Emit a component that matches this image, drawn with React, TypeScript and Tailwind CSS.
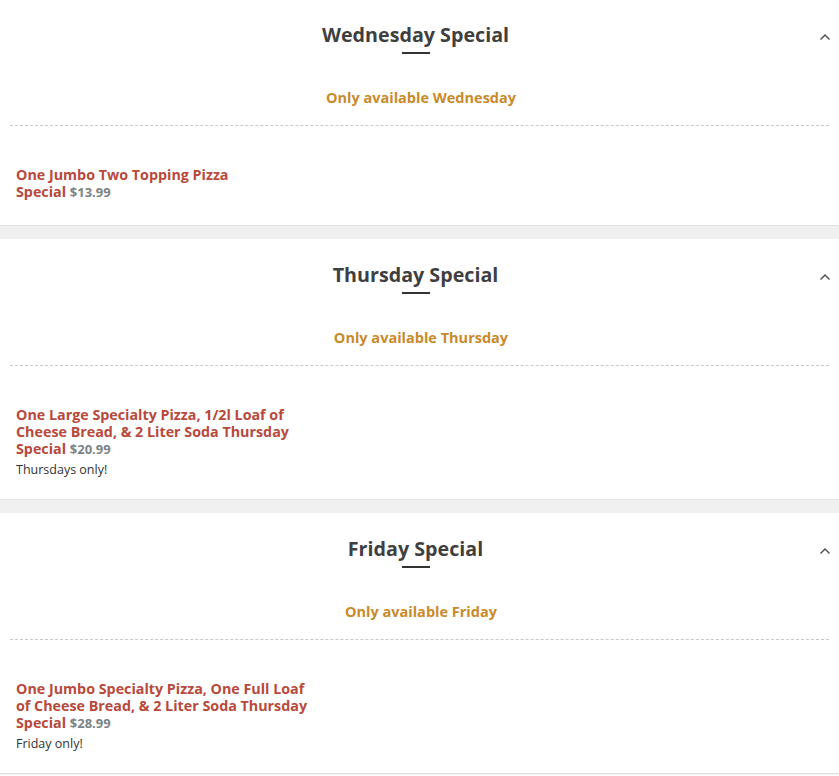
import React from "react";

type Special = {
  day: string;
  name: string;
  lastWord: string;
  price: string;
  note?: string;
};

const specials: Special[] = [
  {
    day: "Wednesday",
    name: "One Jumbo Two Topping Pizza",
    lastWord: "Special",
    price: "$13.99",
  },
  {
    day: "Thursday",
    name: "One Large Specialty Pizza, 1/2l Loaf of Cheese Bread, & 2 Liter Soda Thursday",
    lastWord: "Special",
    price: "$20.99",
    note: "Thursdays only!",
  },
  {
    day: "Friday",
    name: "One Jumbo Specialty Pizza, One Full Loaf of Cheese Bread, & 2 Liter Soda Thursday",
    lastWord: "Special",
    price: "$28.99",
    note: "Friday only!",
  },
];

function Chevron() {
  return (
    <svg width="12" height="8" viewBox="0 0 12 8" fill="none" className="absolute right-[8px] top-[34px]">
      <path d="M1.5 6.5 L6 2 L10.5 6.5" stroke="#4a4a4a" strokeWidth="1.4" />
    </svg>
  );
}

function SpecialCard({ s }: { s: Special }) {
  return (
    <section className="relative bg-white border-b border-[#e2e2e2] mb-[13px]">
      <Chevron />
      <div className="pt-[22px] pr-[8px] flex flex-col items-center">
        <h2 className="text-[19.7px] leading-[28px] font-bold text-[#3f3f3f]">{s.day} Special</h2>
        <div className="mt-[3px] w-[28px] h-[2px] bg-[#333]" />
      </div>
      <p className="mt-[34px] pl-[3px] text-center text-[14.5px] leading-[20px] font-bold text-[#c98a2b]">
        Only available {s.day}
      </p>
      <div className="mx-[10px] mt-[17px] border-t border-dashed border-[#c8c8c8]" />
      <div className={s.note ? "pl-[16px] pt-[40px] pb-[20px]" : "pl-[16px] pt-[40px] pb-[24px]"}>
        <div className="w-[305px] text-[14.3px] leading-[17px] font-bold text-[#b8493b]">
          {s.name}{" "}
          <span className="whitespace-nowrap">
            {s.lastWord}{" "}
            <span className="text-[13px] text-[#7b8387]">{s.price}</span>
          </span>
        </div>
        {s.note && (
          <p className="mt-[3px] text-[12.5px] leading-[18px] text-[#333]">{s.note}</p>
        )}
      </div>
    </section>
  );
}

export default function App() {
  return (
    <div className="min-h-screen bg-[#f0f0f0] font-['Open_Sans',sans-serif] -mt-[1px]">
      {specials.map((s) => (
        <SpecialCard key={s.day} s={s} />
      ))}
    </div>
  );
}
